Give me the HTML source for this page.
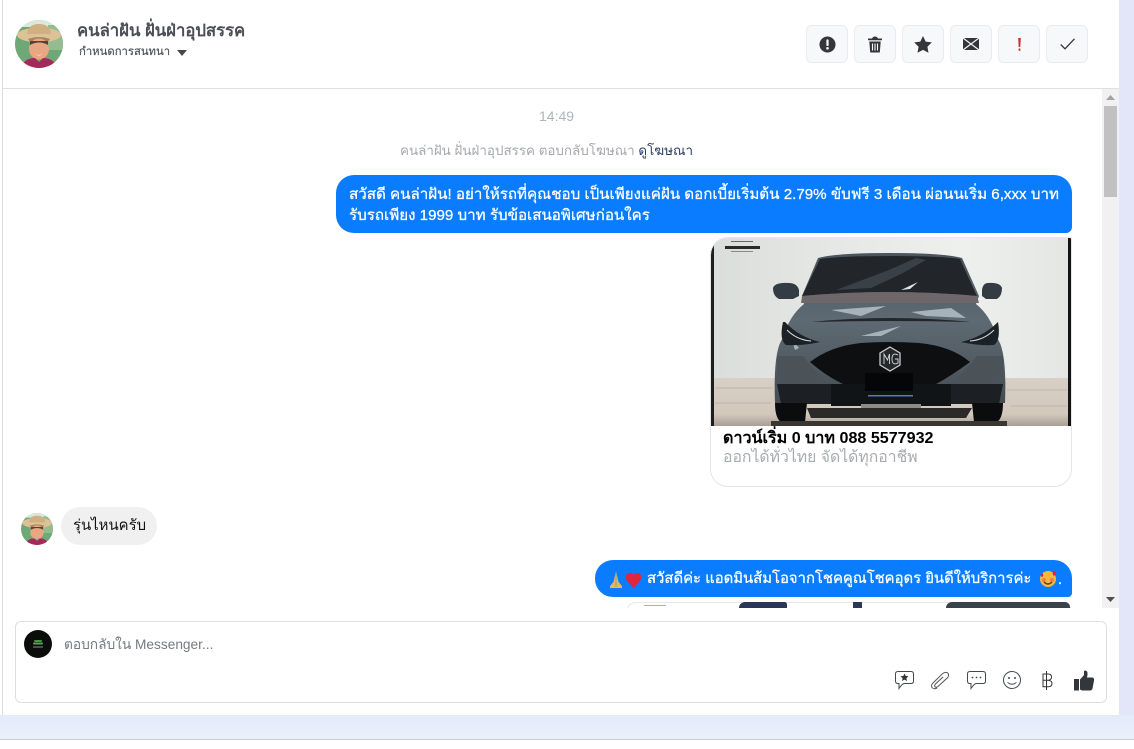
<!DOCTYPE html>
<html lang="th"><head><meta charset="utf-8"><title>Messenger</title>
<style>
*{box-sizing:border-box}
html,body{margin:0;padding:0}
body{width:1134px;height:749px;overflow:hidden;position:relative;background:#fff;font-family:"Liberation Sans","Noto Sans CJK SC",sans-serif}
.abs{position:absolute}
.t{position:absolute;white-space:nowrap}
.btn{position:absolute;top:25px;width:42px;height:38px;background:#f7f8fa;border:1px solid #e9ebee;border-radius:6px;display:flex;align-items:center;justify-content:center}
.bub{position:absolute;background:#0a7cff;color:#fff;font-size:15px;line-height:21px;white-space:nowrap}
.w{-webkit-text-stroke:.25px #fff}
</style></head><body>
<div class="abs" style="left:0;top:0;width:1134px;height:739px;background:#e3e6f8"></div>
<div class="abs" style="left:0;top:715px;width:1134px;height:24px;background:linear-gradient(180deg,#e3ebf9,#eaf0fa)"></div>
<div class="abs" style="left:0;top:739px;width:1134px;height:1px;background:#c9ccd1"></div>
<div class="abs" style="left:0;top:0;width:2px;height:715px;background:#fff"></div>
<div class="abs" style="left:2px;top:0;width:1117px;height:715px;background:#fff;border-left:1px solid #dcdcdc"></div>
<div class="abs" style="left:3px;top:88px;width:1116px;height:1px;background:#e0e0e0"></div>

<svg class="abs" style="left:15px;top:20px" width="48" height="48" viewBox="0 0 48 48"><defs><clipPath id="a"><circle cx="24" cy="24" r="24"/></clipPath></defs><g clip-path="url(#a)"><rect width="48" height="48" fill="#6ea877"/><rect y="0" width="48" height="7" fill="#dbe9dc"/><rect x="33" y="5" width="15" height="25" fill="#93bd90"/><ellipse cx="24" cy="15" rx="22" ry="7.500" fill="#dcc296"/><path d="M12 14Q13 4 24 4Q35 4 36 14Z" fill="#d0b083"/><path d="M13 19Q24 15 35 19L32 23H16Z" fill="#a8875c"/><ellipse cx="24" cy="29" rx="10" ry="10.500" fill="#e8a682"/><path d="M15 25Q24 20 33 25V21H15Z" fill="#5a4230"/><path d="M20 34Q24 36 28 34Q24 37 20 34Z" fill="#fff"/><path d="M6 48Q9 38 20 38L24 42L28 38Q39 38 42 48Z" fill="#a32a5b"/></g></svg>
<div class="t" style="left:77px;top:21px;font-size:16.700px;line-height:20px;font-weight:700;color:#4b4f56">คนล่าฝัน ฝั่นฝ่าอุปสรรค</div>
<div class="t" style="left:79px;top:45px;font-size:11.300px;line-height:15px;color:#4b4f56;-webkit-text-stroke:.15px #4b4f56">กำหนดการสนทนา</div>
<svg class="abs" style="left:177px;top:50px" width="10" height="6" viewBox="0 0 10 6"><path d="M0 0H10L5 6Z" fill="#444950"/></svg>

<div class="btn" style="left:806px"><svg width="17" height="17" viewBox="0 0 18 18"><circle cx="9" cy="9" r="8.500" fill="#33363b"/><rect x="7.800" y="3.600" width="2.400" height="7" rx="1" fill="#f7f8fa"/><circle cx="9" cy="13" r="1.400" fill="#f7f8fa"/></svg></div>
<div class="btn" style="left:854px"><svg width="14" height="17" viewBox="0 0 14 17"><path d="M0 2.500H14V4.200H0ZM4 2.500Q5 .5 7 .5Q9 .5 10 2.500Z" fill="#33363b"/><path d="M1.300 5.500H12.700L11.800 16.500H2.200Z" fill="#33363b"/><path d="M4.500 7.500V14.500M7 7.500V14.500M9.500 7.500V14.500" stroke="#f7f8fa" stroke-width="1.100"/></svg></div>
<div class="btn" style="left:902px"><svg width="18" height="17" viewBox="0 0 18 17"><path d="M9 0L11.700 5.600L17.800 6.400L13.400 10.700L14.500 16.800L9 13.900L3.500 16.800L4.600 10.700L.2 6.400L6.300 5.600Z" fill="#33363b"/></svg></div>
<div class="btn" style="left:950px"><svg width="16" height="12" viewBox="0 0 16 12"><rect width="16" height="12" fill="#33363b"/><path d="M0 0L16 12M16 0L0 12" stroke="#f7f8fa" stroke-width="1.200"/></svg></div>
<div class="btn" style="left:998px"><svg width="3" height="13" viewBox="0 0 3 13"><path d="M.2 0H2.800L2.300 9H.7Z" fill="#c9302a"/><rect x=".6" y="10.500" width="1.800" height="2.300" fill="#c9302a"/></svg></div>
<div class="btn" style="left:1046px"><svg width="15" height="12" viewBox="0 0 15 12"><path d="M.7 6.500L5 10.800L14.500 .8" fill="none" stroke="#33363b" stroke-width="1.300"/></svg></div>

<div class="abs" style="left:1102px;top:89px;width:17px;height:519px;background:#f1f1f1"></div>
<svg class="abs" style="left:1106px;top:95px" width="9" height="6"><path d="M0 5H9L4.500 0Z" fill="#a3a3a3"/></svg>
<div class="abs" style="left:1104px;top:106px;width:13px;height:91px;background:#c1c1c1"></div>
<svg class="abs" style="left:1106px;top:597px" width="9" height="6"><path d="M0 0H9L4.500 5Z" fill="#505050"/></svg>

<div class="t" style="left:539px;top:108px;font-size:14px;line-height:16px;color:#b0b3b8">14:49</div>
<div class="t" style="left:400px;top:142px;font-size:13.400px;line-height:18px;color:#a5a8ad">คนล่าฝัน ฝั่นฝ่าอุปสรรค ตอบกลับโฆษณา <span style="color:#2c3e66">ดูโฆษณา</span></div>

<div class="bub w" style="left:336px;top:175px;width:736px;height:58px;border-radius:18px 18px 6px 18px;padding:9px 0 0 13px;font-size:15.150px">สวัสดี คนล่าฝัน! อย่าให้รถที่คุณชอบ เป็นเพียงแค่ฝัน ดอกเบี้ยเริ่มต้น 2.79% ขับฟรี 3 เดือน ผ่อนนเริ่ม 6,xxx บาท<br>รับรถเพียง 1999 บาท รับข้อเสนอพิเศษก่อนใคร</div>

<div class="abs" style="left:710px;top:237px;width:362px;height:250px;border:1px solid #e4e6ea;border-radius:18px 2px 18px 18px;overflow:hidden;background:#fff">
<svg width="360" height="188" viewBox="0 0 360 188" style="display:block">
<defs>
<linearGradient id="w" x1="0" y1="0" x2="1" y2="0"><stop offset="0" stop-color="#dadedb"/><stop offset=".35" stop-color="#e6e8e5"/><stop offset=".7" stop-color="#eef0ee"/><stop offset="1" stop-color="#e4e6e3"/></linearGradient>
<linearGradient id="b" x1="0" y1="0" x2="0" y2="1"><stop offset="0" stop-color="#4a545c"/><stop offset=".45" stop-color="#5e6a73"/><stop offset="1" stop-color="#454d53"/></linearGradient>
<linearGradient id="f" x1="0" y1="0" x2="0" y2="1"><stop offset="0" stop-color="#d8cfc5"/><stop offset=".75" stop-color="#d2c8bc"/><stop offset="1" stop-color="#a89e93"/></linearGradient>
</defs>
<rect width="360" height="188" fill="url(#w)"/>
<rect y="140" width="360" height="48" fill="url(#f)"/>
<path d="M4 150H62M296 152H356M4 165H60M300 168H356" stroke="#b5ab9f" stroke-width=".8"/>
<rect x="0" width="3" height="188" fill="#1e1e1e"/><rect x="357" width="3" height="188" fill="#141414"/>
<rect x="14" y="8" width="35" height="3" fill="#2a2a2a"/><rect x="20" y="3" width="22" height="1" fill="#666"/><rect x="20" y="13" width="22" height="1" fill="#888"/>
<path d="M64 165Q62 112 72 100Q78 78 93 66L91 58L107 20Q125 15 178 15Q233 15 251 20L268 58L265 66Q280 78 286 100Q296 112 294 165Z" fill="url(#b)"/>
<path d="M91 58L109 21Q130 18 178 18Q230 18 249 21L266 58Q178 50 91 58Z" fill="#22262a"/>
<path d="M125 52L178 32L205 20L215 22L190 36L160 50Z" fill="#3a4146"/>
<path d="M190 52L207 44L199 51Z" fill="#dfe3e3"/>
<path d="M91 58Q178 50 266 58L268 65H90Z" fill="#6d676a"/>
<path d="M62 50Q64 44 78 45Q86 45 88 52V58L82 61H68Q62 58 62 50Z" fill="#333c43"/>
<path d="M291 50Q289 44 277 45Q272 45 271 52V58L275 61H286Q291 58 291 50Z" fill="#333c43"/>
<path d="M120 72L175 68L150 78ZM200 74L240 70L255 80L215 78ZM150 98L190 88L170 98ZM80 100L88 110L84 112Z" fill="#a7b3bb"/>
<path d="M100 84Q178 76 260 84Q178 82 100 84Z" fill="#22272b"/>
<path d="M72 84Q68 102 75 107Q92 108 109 104Q88 99 74 84Z" fill="#1c2125"/>
<path d="M287 84Q290 102 283 107Q268 108 250 104Q272 99 287 84Z" fill="#1c2125"/>
<path d="M76 92Q86 102 100 103M283 92Q273 102 259 103" fill="none" stroke="#d8dde0" stroke-width="1"/>
<path d="M99 124Q120 108 150 105Q178 103 208 105Q240 108 259 124Q240 138 225 146H132Q115 138 99 124Z" fill="#0d0f11"/>
<path d="M66 118H92L100 128L118 146H74L66 140Z" fill="#4c5358"/>
<path d="M292 118H266L258 128L240 146H284L292 140Z" fill="#4c5358"/>
<path d="M66 146H132V166H70Z" fill="#1c2024"/>
<path d="M292 146H226V166H288Z" fill="#1c2024"/>
<rect x="120" y="146" width="120" height="22" fill="#111416"/>
<path d="M150 170Q179 176 210 170V166H150Z" fill="#8e8a84"/>
<rect x="154" y="135" width="48" height="18" fill="#050607"/>
<rect x="157" y="157" width="45" height="1.500" fill="#5a7aa8"/>
<path d="M179 109L189 115V127L179 133L169 127V115Z" fill="#24282b" stroke="#c8cccd" stroke-width="1.300"/>
<path d="M173 126V116L176.500 122L178.500 116V126M187 117Q181 114 181 121Q181 128 187 125V121H184" fill="none" stroke="#d6d9da" stroke-width=".9"/>
<path d="M64 165H96L94 184H70Q64 180 64 165ZM292 165H261L263 184H286Q292 180 292 165Z" fill="#0b0c0d"/>
<path d="M96 170H261L255 180H100Z" fill="#2b2a29"/>
<rect x="60" y="183" width="236" height="5" fill="#3a3632"/>
</svg>
<div class="t" style="left:12px;top:190px;font-size:16.100px;line-height:20px;font-weight:700;color:#000">ดาวน์เริ่ม 0 บาท 088 5577932</div>
<div class="t" style="left:12px;top:210px;font-size:15.750px;line-height:20px;color:#a8abb0">ออกได้ทั่วไทย จัดได้ทุกอาชีพ</div>
</div>

<svg class="abs" style="left:21px;top:513px" width="32" height="32" viewBox="0 0 48 48"><defs><clipPath id="c"><circle cx="24" cy="24" r="24"/></clipPath></defs><g clip-path="url(#c)"><rect width="48" height="48" fill="#6ea877"/><rect y="0" width="48" height="7" fill="#dbe9dc"/><rect x="33" y="5" width="15" height="25" fill="#93bd90"/><ellipse cx="24" cy="15" rx="22" ry="7.500" fill="#dcc296"/><path d="M12 14Q13 4 24 4Q35 4 36 14Z" fill="#d0b083"/><path d="M13 19Q24 15 35 19L32 23H16Z" fill="#a8875c"/><ellipse cx="24" cy="29" rx="10" ry="10.500" fill="#e8a682"/><path d="M15 25Q24 20 33 25V21H15Z" fill="#5a4230"/><path d="M6 48Q9 38 20 38L24 42L28 38Q39 38 42 48Z" fill="#a32a5b"/></g></svg>
<div class="bub" style="left:61px;top:507px;width:96px;height:38px;border-radius:19px;background:#f0f0f0;color:#111;padding:9px 0 0 12px;font-size:14.900px">รุ่นไหนครับ</div>

<div class="abs" style="left:595px;top:560px;width:477px;height:37px;border-radius:18px 18px 4px 18px;background:#0a7cff"></div>
<svg class="abs" style="left:609px;top:570px" width="33" height="19" viewBox="0 0 33 19"><path d="M7 1L9.500 12L13 16V18H1V16L4.500 12Z" fill="#e7b955"/><path d="M7 2V17" stroke="#8d99b5"/><path d="M24.500 18L18 11Q15.500 6 18.500 3.500Q22 1.500 24.500 5Q27 1.500 30.500 3.500Q33.500 6 31 11Z" fill="#e0263c"/></svg>
<div class="t w" style="left:647px;top:569px;font-size:14.850px;line-height:21px;color:#fff">สวัสดีค่ะ แอดมินส้มโอจากโชคคูณโชคอุดร ยินดีให้บริการค่ะ</div>
<svg class="abs" style="left:1039px;top:570px" width="18" height="18" viewBox="0 0 18 18"><circle cx="9" cy="9" r="8" fill="#f5b83d"/><circle cx="5" cy="10" r="2" fill="#ee7b57"/><circle cx="13" cy="10" r="2" fill="#ee7b57"/><path d="M5 12Q9 16 13 12" fill="none" stroke="#6b3a1e" stroke-width="1.300"/><path d="M14 2Q16 0 17 2Q18 4 15 6Q13 4 14 2ZM2 4Q3 2 4 4Q5 6 3 7Q1 6 2 4Z" fill="#e0263c"/></svg>
<div class="t w" style="left:1058px;top:569px;font-size:15px;line-height:21px;color:#fff">.</div>

<div class="abs" style="left:626px;top:602px;width:446px;height:6px;overflow:hidden">
<div class="abs" style="left:0;top:0;width:446px;height:20px;border:1px solid #e8e8ea;border-radius:18px;background:#fff"></div>
<div class="abs" style="left:113px;top:0;width:48px;height:6px;background:#2a3758;border-radius:10px 4px 0 0"></div>
<div class="abs" style="left:227px;top:0;width:9px;height:6px;background:#2a3758"></div>
<div class="abs" style="left:320px;top:0;width:124px;height:6px;background:#3a424b;border-radius:22px 18px 0 0"></div>
<div class="abs" style="left:18px;top:3px;width:22px;height:1px;background:#d89a9a"></div>
</div>

<div class="abs" style="left:15px;top:621px;width:1092px;height:82px;border:1px solid #dcdee1;border-radius:6px;background:#fff"></div>
<svg class="abs" style="left:24px;top:630px" width="28" height="28" viewBox="0 0 28 28"><circle cx="14" cy="14" r="14" fill="#0b0d0b"/><rect x="10" y="10" width="8" height="2" rx="1" fill="#3f9a45"/><rect x="9" y="12.500" width="10" height="2" rx="1" fill="#51a557"/><rect x="9" y="16.500" width="10" height="1" fill="#8a948a"/></svg>
<div class="t" style="left:64px;top:636px;font-size:13.700px;line-height:17px;color:#757a80">ตอบกลับใน Messenger...</div>

<svg class="abs" style="left:894px;top:670px" width="21" height="20" viewBox="0 0 21 20"><path d="M4 1.500H17Q19.500 1.500 19.500 4V11Q19.500 13.500 17 13.500H10Q8 14 5 18.500V13.500H4Q1.500 13.500 1.500 11V4Q1.500 1.500 4 1.500Z" fill="none" stroke="#444950" stroke-width="1"/><path d="M10.500 3.500L11.700 6L14.500 6.300L12.400 8.200L13 11L10.500 9.600L8 11L8.600 8.200L6.500 6.300L9.300 6Z" fill="#333"/></svg>
<svg class="abs" style="left:930px;top:671px" width="20" height="19" viewBox="0 0 20 19"><path d="M7 17Q4 18.500 2.300 16.800Q.6 15 2.500 12.500L12.500 2.700Q15.500 .5 17.700 2Q19.500 4 17.500 6.800L8 15.500Q6 17 5 15.700Q4 14.500 5.500 13L13 6" fill="none" stroke="#555" stroke-width="1"/></svg>
<svg class="abs" style="left:966px;top:670px" width="21" height="20" viewBox="0 0 21 20"><path d="M4 1.500H17Q19.500 1.500 19.500 4V11Q19.500 13.500 17 13.500H10Q8 14 5 18.500V13.500H4Q1.500 13.500 1.500 11V4Q1.500 1.500 4 1.500Z" fill="none" stroke="#444950" stroke-width="1"/><circle cx="6.500" cy="7.500" r=".9" fill="#444950"/><circle cx="10.500" cy="7.500" r=".9" fill="#444950"/><circle cx="14.500" cy="7.500" r=".9" fill="#444950"/></svg>
<svg class="abs" style="left:1002px;top:670px" width="20" height="20" viewBox="0 0 20 20"><circle cx="10" cy="10" r="8.500" fill="none" stroke="#444950" stroke-width="1"/><circle cx="7" cy="8" r="1" fill="#444950"/><circle cx="13" cy="8" r="1" fill="#444950"/><path d="M5.500 12.500Q10 16 14.500 12.500" fill="none" stroke="#444950" stroke-width="1"/></svg>
<svg class="abs" style="left:1041px;top:671px" width="12" height="19" viewBox="0 0 12 19"><path d="M2 3H7Q10.500 3 10.500 6Q10.500 9 7 9.200H2ZM7 9.200Q11 9.400 11 12.500Q11 15.800 7 15.800H2V3M5.500 0V19" fill="none" stroke="#333" stroke-width="1"/></svg>
<svg class="abs" style="left:1073px;top:670px" width="22" height="21" viewBox="0 0 22 21"><rect x="1" y="9" width="5" height="11.500" fill="#33363b"/><path d="M7 9.500L11 5V1.500Q11 .5 12.500 .5Q15 1 14.500 5L14 7.500H19.500Q21.500 8 21 10.500L19.500 18.500Q19 20.500 17 20.500H9L7 19.500Z" fill="#33363b"/></svg>
</body></html>
